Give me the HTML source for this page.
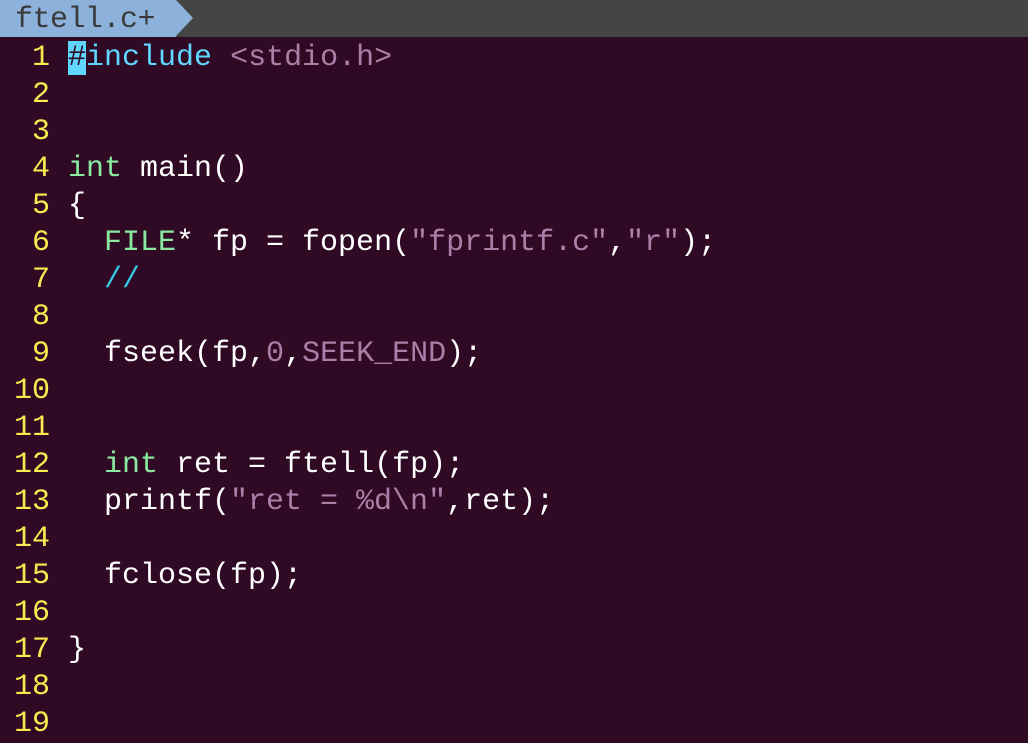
<!DOCTYPE html>
<html><head><style>
html,body{margin:0;padding:0;width:1028px;height:739px;overflow:hidden;background:#300a24;}
#bar{position:absolute;left:0;top:0;width:1028px;height:37px;background:#454545;}
#tab{position:absolute;left:0;top:0;width:176px;height:37px;background:#8cb2dc;color:#3a3a3a;font:30px "Liberation Mono",monospace;line-height:40px;padding-left:15px;box-sizing:border-box;letter-spacing:-0.5px}
#arr{position:absolute;left:176px;top:0;width:0;height:0;border-top:18.5px solid transparent;border-bottom:18.5px solid transparent;border-left:17px solid #8cb2dc;}
#code{position:absolute;left:0;top:40px;font:30px "Liberation Mono",monospace;color:#fff;}
.l{height:37px;line-height:37px;white-space:pre;position:relative;}
.n{display:inline-block;width:50px;text-align:right;color:#fce94f;margin-right:18px;}
.p{color:#5fd7ff}.s{color:#ad7fa8}.t{color:#8ae9a0}.c{color:#34c8e2}
.cur{background:#5fd7ff;color:#300a24}
</style></head><body>
<div id="bar"></div><div id="tab">ftell.c+</div><div id="arr"></div>
<div id="code">
<div class="l"><span class="n">1</span><span class="cur">#</span><span class="p">include</span> <span class="s">&lt;stdio.h&gt;</span></div>
<div class="l"><span class="n">2</span></div>
<div class="l"><span class="n">3</span></div>
<div class="l"><span class="n">4</span><span class="t">int</span> main()</div>
<div class="l"><span class="n">5</span>{</div>
<div class="l"><span class="n">6</span>  <span class="t">FILE</span>* fp = fopen(<span class="s">"fprintf.c"</span>,<span class="s">"r"</span>);</div>
<div class="l"><span class="n">7</span>  <span class="c">//</span></div>
<div class="l"><span class="n">8</span></div>
<div class="l"><span class="n">9</span>  fseek(fp,<span class="s">0</span>,<span class="s">SEEK_END</span>);</div>
<div class="l"><span class="n">10</span></div>
<div class="l"><span class="n">11</span></div>
<div class="l"><span class="n">12</span>  <span class="t">int</span> ret = ftell(fp);</div>
<div class="l"><span class="n">13</span>  printf(<span class="s">"ret = %d\n"</span>,ret);</div>
<div class="l"><span class="n">14</span></div>
<div class="l"><span class="n">15</span>  fclose(fp);</div>
<div class="l"><span class="n">16</span></div>
<div class="l"><span class="n">17</span>}</div>
<div class="l"><span class="n">18</span></div>
<div class="l"><span class="n">19</span></div>
</div>
</body></html>
